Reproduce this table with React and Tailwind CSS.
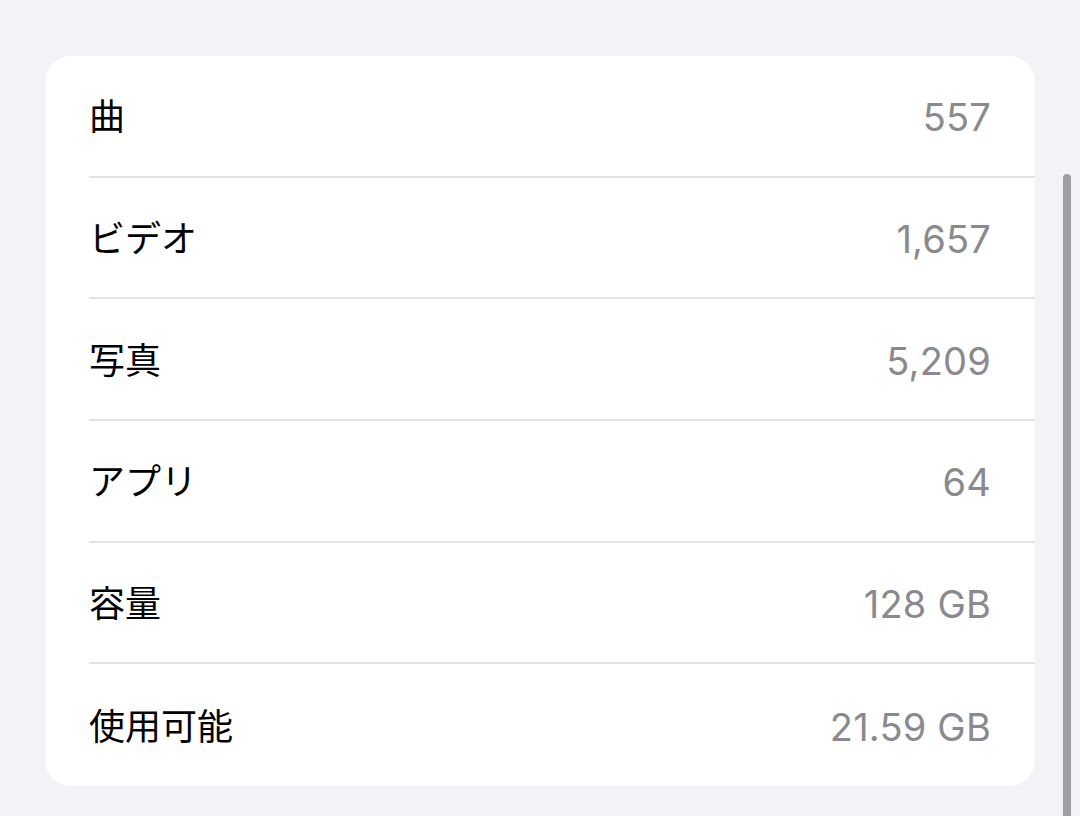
import React from 'react';

const rows = [
  { label: '曲', value: '557' },
  { label: 'ビデオ', value: '1,657' },
  { label: '写真', value: '5,209' },
  { label: 'アプリ', value: '64' },
  { label: '容量', value: '128 GB' },
  { label: '使用可能', value: '21.59 GB' },
];

export default function App() {
  return (
    <div className="relative w-[1080px] h-[816px] overflow-hidden bg-[#f2f2f7] pt-[56px] pl-[45px]
                    font-['Inter','Noto_Sans_CJK_JP',sans-serif]">
      <div className="w-[990px] bg-white rounded-[26px] overflow-hidden">
        {rows.map((r, i) => (
          <div key={r.label} className="pl-[44px]">
            <div className={`h-[121.7px] flex items-center justify-between pr-[44px] pt-[3px]
                            ${i < rows.length - 1 ? 'border-b-2 border-[#e2e2e6]' : ''}`}>
              <span className="text-[36px] text-black leading-none">{r.label}</span>
              <span className="text-[38px] text-[#8a8a8e] leading-none tracking-[0.2px]">{r.value}</span>
            </div>
          </div>
        ))}
      </div>

      {/* scroll indicator */}
      <div className="absolute left-[1063px] top-[174px] w-[8px] h-[660px] rounded-full bg-[#9e9ea3]" />
    </div>
  );
}
